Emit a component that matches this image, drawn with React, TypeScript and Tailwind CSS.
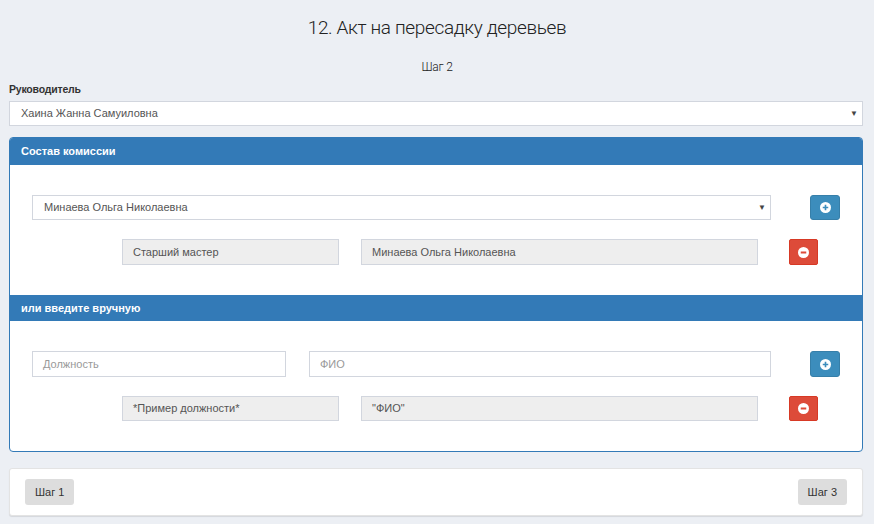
import React from "react"

const font = { fontFamily: '"Liberation Sans", Arial, sans-serif' }

const PlusIcon: React.FC<{ color: string }> = ({ color }) => (
  <svg width="11" height="11" viewBox="0 0 12 12">
    <circle cx="6" cy="6" r="6" fill="#fff" />
    <path d="M6 3v6M3 6h6" stroke={color} strokeWidth="1.8" />
  </svg>
)

const MinusIcon: React.FC<{ color: string }> = ({ color }) => (
  <svg width="11" height="11" viewBox="0 0 12 12">
    <circle cx="6" cy="6" r="6" fill="#fff" />
    <path d="M3 6h6" stroke={color} strokeWidth="2" />
  </svg>
)

const Select: React.FC<{ value: string; className?: string }> = ({ value, className }) => (
  <div
    className={`flex items-center justify-between border border-[#d2d6de] bg-white pl-[11px] pr-[4px] text-[11px] text-[#555] ${className ?? ""}`}
  >
    <span>{value}</span>
    <span className="text-[8px] text-[#444]">▼</span>
  </div>
)

const Field: React.FC<{ value?: string; placeholder?: string; readOnly?: boolean; className?: string }> = ({
  value,
  placeholder,
  readOnly,
  className,
}) => (
  <div
    className={`flex items-center border border-[#d2d6de] px-[10px] text-[11px] ${
      readOnly ? "bg-[#eee] text-[#555]" : "bg-white"
    } ${value ? "text-[#555]" : "text-[#999]"} ${className ?? ""}`}
  >
    {value ?? placeholder}
  </div>
)

const AddButton: React.FC<{ className?: string }> = ({ className }) => (
  <button
    className={`flex w-[30px] items-center justify-center rounded-[3px] border border-[#367fa9] bg-[#3c8dbc] ${className ?? ""}`}
  >
    <PlusIcon color="#3c8dbc" />
  </button>
)

const RemoveButton: React.FC<{ className?: string }> = ({ className }) => (
  <button
    className={`flex w-[29px] items-center justify-center rounded-[2px] border border-[#d73925] bg-[#dd4b39] ${className ?? ""}`}
  >
    <MinusIcon color="#dd4b39" />
  </button>
)

const SectionHeader: React.FC<{ title: string; className?: string }> = ({ title, className }) => (
  <div className={`flex items-center bg-[#337ab7] px-[11px] text-[11px] font-bold text-white ${className ?? ""}`}>
    {title}
  </div>
)

export default function App() {
  return (
    <div className="min-h-[524px] w-[874px] bg-[#eceff4] pb-[8px]" style={font}>
      <div
        className="flex h-[56px] items-center justify-center text-[19px] font-light text-[#222]"
        style={{ fontFamily: 'Roboto, "Liberation Sans", sans-serif', letterSpacing: "-0.35px" }}
      >
        12. Акт на пересадку деревьев
      </div>
      <div
        className="flex h-[22px] items-center justify-center text-[12px] font-light text-[#222]"
        style={{ fontFamily: 'Roboto, "Liberation Sans", sans-serif', letterSpacing: "-0.2px" }}
      >
        Шаг 2
      </div>

      <div className="ml-[9px] w-[854px]">
        <div className="flex h-[23px] items-center pt-[1px] text-[10.5px] font-bold tracking-[-0.2px] text-[#333]">
          Руководитель
        </div>
        <Select value="Хаина Жанна Самуиловна" className="h-[25px]" />

        <div className="mt-[11px] overflow-hidden rounded-[4px] border border-[#337ab7] bg-white">
          <SectionHeader title="Состав комиссии" className="h-[27px]" />
          <div className="px-[22px] pt-[30px] pb-[30px]">
            <div className="flex items-center">
              <Select value="Минаева Ольга Николаевна" className="h-[25px] w-[739px]" />
              <AddButton className="ml-[39px] h-[25px]" />
            </div>
            <div className="mt-[19px] flex">
              <Field value="Старший мастер" readOnly className="ml-[90px] h-[26px] w-[217px]" />
              <Field value="Минаева Ольга Николаевна" readOnly className="ml-[22px] h-[26px] w-[397px]" />
              <RemoveButton className="ml-[31px] h-[26px]" />
            </div>
          </div>

          <SectionHeader title="или введите вручную" className="h-[26px]" />
          <div className="px-[22px] pt-[30px] pb-[30px]">
            <div className="flex items-center">
              <Field placeholder="Должность" className="h-[26px] w-[254px]" />
              <Field placeholder="ФИО" className="ml-[23px] h-[26px] w-[462px]" />
              <AddButton className="ml-[39px] h-[26px]" />
            </div>
            <div className="mt-[19px] flex">
              <Field value="*Пример должности*" readOnly className="ml-[90px] h-[25px] w-[217px]" />
              <Field value={'"ФИО"'} readOnly className="ml-[22px] h-[25px] w-[397px]" />
              <RemoveButton className="ml-[31px] h-[25px]" />
            </div>
          </div>
        </div>

        <div className="mt-[16px] flex h-[48px] items-center justify-between rounded-[3px] border border-[#e3e3e3] bg-white px-[15px] shadow-[0_1px_1px_rgba(0,0,0,0.1)]">
          <button className="h-[26px] rounded-[3px] bg-[#ddd] px-[10px] text-[11px] text-[#333]">Шаг 1</button>
          <button className="h-[26px] rounded-[3px] bg-[#ddd] px-[10px] text-[11px] text-[#333]">Шаг 3</button>
        </div>
      </div>
    </div>
  )
}
